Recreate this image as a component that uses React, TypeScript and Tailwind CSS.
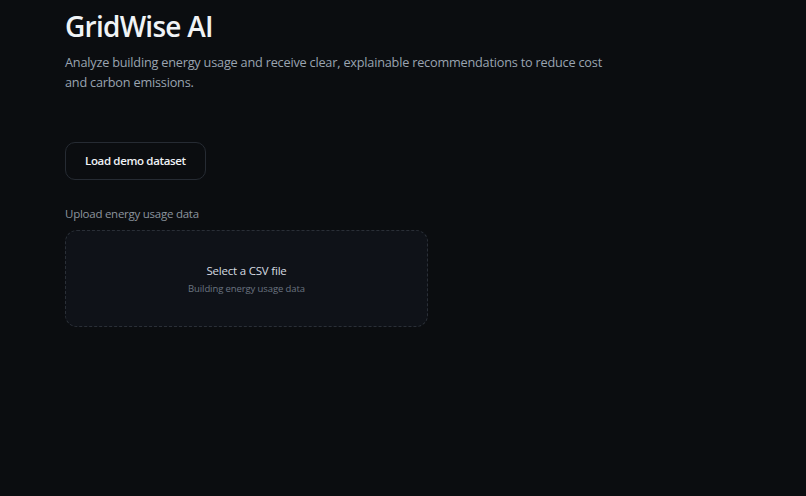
export default function App() {
  return (
    <div
      className="min-h-[496px] w-full bg-[#0b0d10] text-[#e6edf3]"
      style={{ fontFamily: '"Open Sans", "Noto Sans", sans-serif' }}
    >
      <div className="pl-[65px] pt-[8px]">
        <h1 className="text-[28px] font-semibold leading-[36px] tracking-[-0.75px] text-[#f0f3f6]">GridWise AI</h1>
        <p className="mt-[8px] max-w-[545px] text-[12.7px] leading-[20px] tracking-[-0.2px] text-[#9aa4b0]">
          Analyze building energy usage and receive clear, explainable recommendations to reduce cost and carbon
          emissions.
        </p>

        <button className="mt-[50px] h-[38px] rounded-[10px] border border-[#262b33] bg-[#0b0d10] px-[19px] text-[11.5px] font-semibold tracking-[-0.35px] text-[#f0f3f6]">
          Load demo dataset
        </button>

        <div className="mt-[25px] text-[11.5px] tracking-[-0.25px] text-[#8b949e]">Upload energy usage data</div>

        <div className="mt-[8px] flex h-[97px] w-[363px] flex-col items-center justify-center rounded-[12px] border border-dashed border-[#2a2f37] bg-[#0f1218]">
          <div className="text-[11.5px] leading-[16px] tracking-[-0.2px] text-[#d5dbe1]">Select a CSV file</div>
          <div className="mt-[3px] text-[9.5px] leading-[13px] tracking-[-0.1px] text-[#6b7480]">Building energy usage data</div>
        </div>
      </div>
    </div>
  );
}
